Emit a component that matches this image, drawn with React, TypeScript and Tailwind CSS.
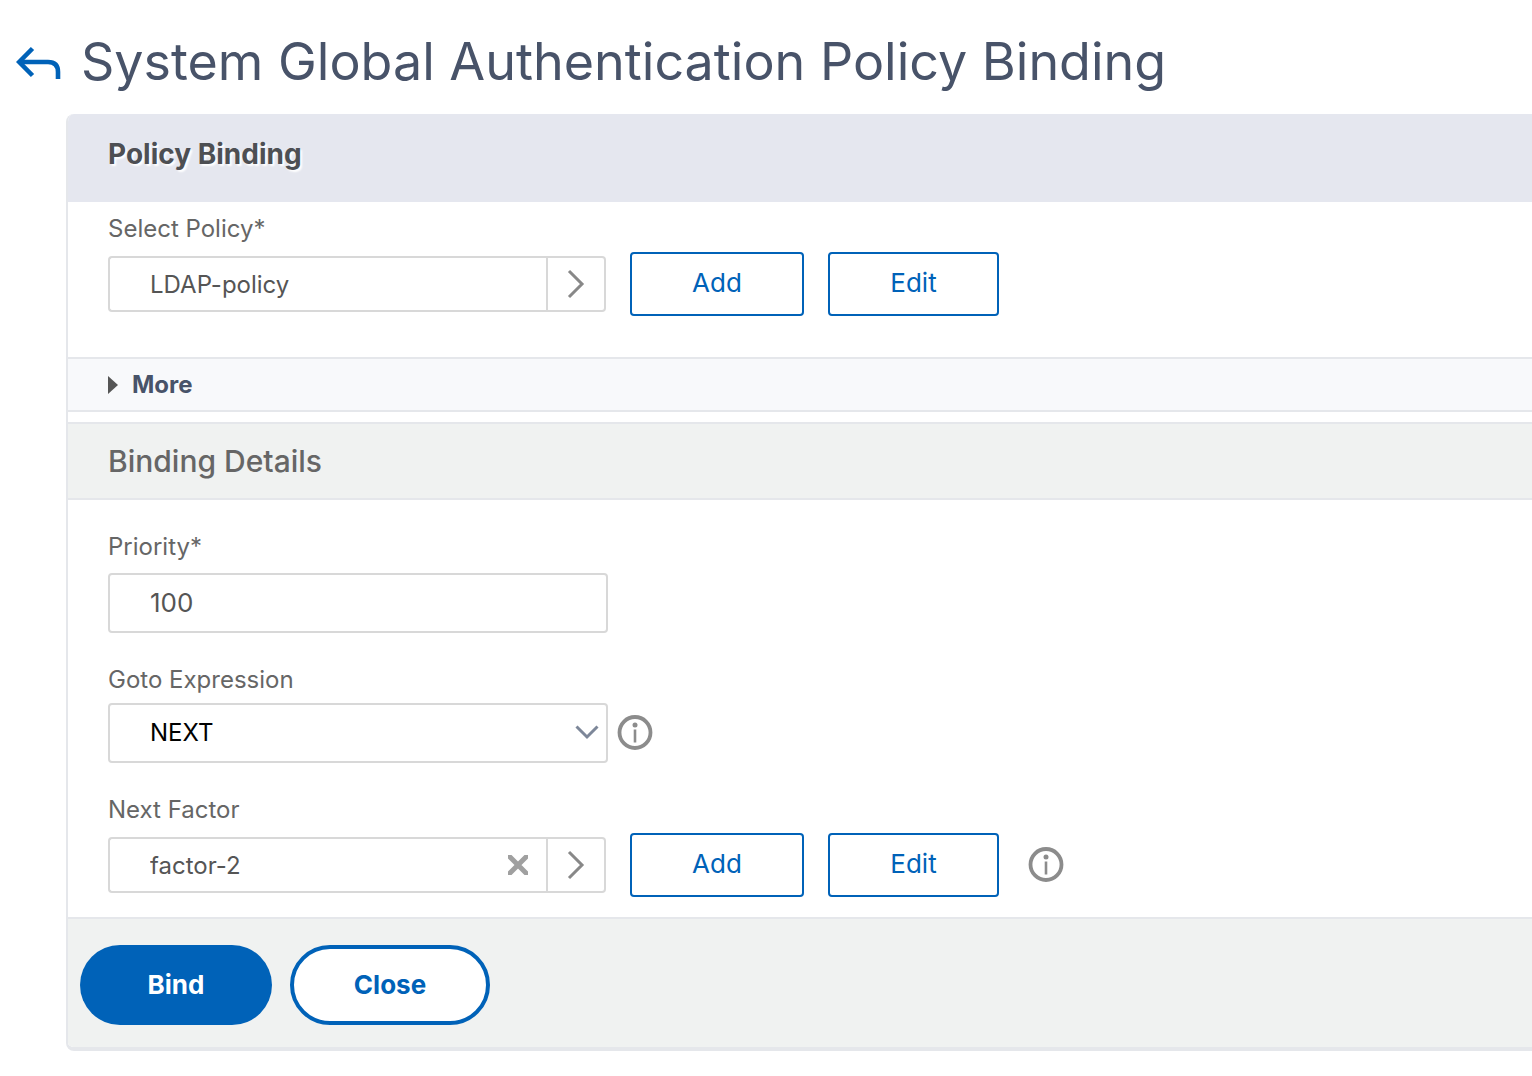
import type { ReactNode } from 'react';

const labelClass = 'block w-fit text-2xl leading-8 text-[#666666]';
const fieldClass = 'border-2 border-[#d8d8d8] rounded-sm bg-white pl-10 outline-none';

const InfoButton = ({ label }: { label: string }) => (
  <button type="button" aria-label={label} className="shrink-0">
    <svg className="w-9 h-9" viewBox="0 0 36 36" fill="none">
      <circle cx="18" cy="17.5" r="15.5" stroke="#8c8c8c" strokeWidth="3.8" />
      <circle cx="18" cy="10" r="2.5" fill="#8c8c8c" />
      <path d="M18 14.5V27.5" stroke="#8c8c8c" strokeWidth="2.6" />
    </svg>
  </button>
);

const OutlineButton = ({ children, className }: { children: ReactNode; className: string }) => (
  <button
    type="button"
    className={`h-16 shrink-0 border-2 border-[#0062b8] rounded-sm bg-white pb-0.5 text-[26px] leading-8 text-[#0062b8] ${className}`}
  >
    {children}
  </button>
);

type PickerProps = {
  id: string;
  value: string;
  clearable?: boolean;
};

const Picker = ({ id, value, clearable }: PickerProps) => (
  <div className="flex h-14 w-[498px] shrink-0">
    <div className="relative flex-1 min-w-0">
      <input
        id={id}
        type="text"
        defaultValue={value}
        className={`${fieldClass} w-full h-full rounded-r-none border-r-0 text-2xl text-[#555555]`}
      />
      {clearable && (
        <button type="button" aria-label="Clear" className="absolute right-[18px] top-[18px]">
          <svg className="w-5 h-5" viewBox="0 0 20 20" fill="none">
            <path d="M0 0L20 20M20 0L0 20" stroke="#a0a0a0" strokeWidth="5" />
          </svg>
        </button>
      )}
    </div>
    <button
      type="button"
      aria-label="Choose"
      className="w-[60px] border-2 border-[#d8d8d8] rounded-r-sm bg-white flex items-center justify-center"
    >
      <svg className="w-8 h-8" viewBox="0 0 32 32" fill="none">
        <path d="M9 3L22 16L9 29" stroke="#888888" strokeWidth="3" />
      </svg>
    </button>
  </div>
);

const App = () => {
  return (
    <main className="min-h-screen overflow-x-hidden bg-white pb-6 font-['Inter',sans-serif]">
      <header className="flex items-center pt-[30px] pb-5 pl-4">
        <a href="#" aria-label="Back" className="mr-5 shrink-0">
          <svg className="w-[45px] h-9" viewBox="0 0 45 36" fill="none" stroke="#0062b8" strokeWidth="4.6">
            <path d="M16.5 4.5L3.2 18L16.5 31.5" />
            <path d="M3 18H32C38.5 18 42 21.5 42 28V35" />
          </svg>
        </a>
        <h1 className="text-[52px] leading-[64px] text-[#485369]">
          System Global Authentication Policy Binding
        </h1>
      </header>

      <form className="ml-[66px] border-l-2 border-b-4 border-[#e5e7eb] rounded-l-lg overflow-hidden">
        <div className="h-[88px] bg-[#e5e7ef] pl-10 pt-5">
          <h2 className="text-[28px] leading-10 font-bold text-[#4d4f53] [text-shadow:2px_2px_2px_#ffffff]">
            Policy Binding
          </h2>
        </div>

        <div className="pl-10 pt-[11px] pb-[41px]">
          <label htmlFor="policy" className={`${labelClass} mb-[7px]`}>Select Policy*</label>
          <div className="flex items-center gap-6">
            <Picker id="policy" value="LDAP-policy" />
            <div className="flex gap-6">
              <OutlineButton className="w-[174px]">Add</OutlineButton>
              <OutlineButton className="w-[171px]">Edit</OutlineButton>
            </div>
          </div>
        </div>

        <button
          type="button"
          className="w-full h-[55px] border-y-2 border-[#e5e7eb] bg-[#f8f9fb] pl-10 flex items-center text-left text-2xl font-bold text-[#485369]"
        >
          <svg className="w-[10px] h-[18px] mr-[14px]" viewBox="0 0 10 18">
            <path d="M0 0L10 9L0 18Z" fill="#555555" />
          </svg>
          More
        </button>

        <div className="mt-[10px] h-[78px] border-y-2 border-[#e5e7eb] bg-[#f0f2f1] pl-10 flex items-center">
          <h3 className="text-[30px] leading-10 font-medium text-[#666666]">Binding Details</h3>
        </div>

        <div className="pl-10 pt-[31px] pb-5">
          <label htmlFor="priority" className={`${labelClass} mb-[10px]`}>Priority*</label>
          <input
            id="priority"
            type="text"
            defaultValue="100"
            className={`${fieldClass} block w-[500px] h-[60px] pb-0.5 text-[26px] text-[#555555]`}
          />

          <label htmlFor="goto" className={`${labelClass} mt-[31px] mb-[7px]`}>Goto Expression</label>
          <div className="flex items-center gap-[9px]">
            <div className="relative w-[500px]">
              <select
                id="goto"
                defaultValue="NEXT"
                className={`${fieldClass} block appearance-none w-full h-[60px] text-2xl text-black`}
              >
                <option>NEXT</option>
                <option>END</option>
              </select>
              <svg
                className="absolute right-[9px] top-[22px] w-6 h-4 pointer-events-none"
                viewBox="0 0 24 16"
                fill="none"
              >
                <path d="M1.5 1.5L12 12L22.5 1.5" stroke="#7d8799" strokeWidth="3" />
              </svg>
            </div>
            <InfoButton label="About Goto Expression" />
          </div>

          <label htmlFor="factor" className={`${labelClass} mt-[31px] mb-[7px]`}>Next Factor</label>
          <div className="flex items-center gap-[29px]">
            <div className="flex items-center gap-6">
              <Picker id="factor" value="factor-2" clearable />
              <OutlineButton className="w-[174px]">Add</OutlineButton>
              <OutlineButton className="w-[171px]">Edit</OutlineButton>
            </div>
            <InfoButton label="About Next Factor" />
          </div>
        </div>

        <div className="border-t-2 border-[#e5e7eb] bg-[#f0f2f1] pl-3 pt-[26px] pb-[22px] flex gap-[18px]">
          <button
            type="button"
            className="w-48 h-20 rounded-full bg-[#0062b8] pb-0.5 text-[26px] font-bold text-white"
          >
            Bind
          </button>
          <button
            type="button"
            className="w-[200px] h-20 rounded-full border-4 border-[#0062b8] bg-white pb-0.5 text-[26px] font-bold text-[#0062b8]"
          >
            Close
          </button>
        </div>
      </form>
    </main>
  );
};

export default App;
